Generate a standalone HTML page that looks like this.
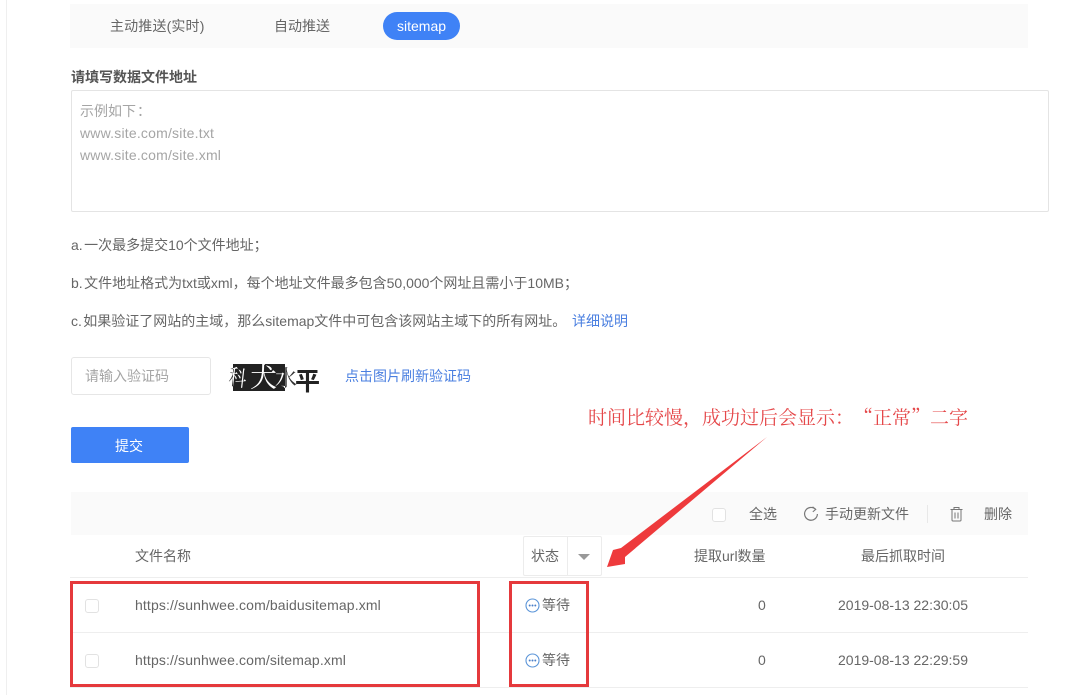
<!DOCTYPE html>
<html lang="zh-CN">
<head>
<meta charset="utf-8">
<style>
html,body{margin:0;padding:0;background:#fff;}
body{width:1084px;height:695px;position:relative;overflow:hidden;font-family:"Liberation Sans","Noto Sans CJK SC",sans-serif;font-size:14px;color:#666;}
.t{position:absolute;white-space:nowrap;line-height:20px;}
.l{letter-spacing:.13px;}
.w{letter-spacing:.2px;}
.s{word-spacing:-2.5px;}
.b{position:absolute;box-sizing:border-box;}
.cb{position:absolute;box-sizing:border-box;width:14px;height:14px;border:1px solid #e2e2e2;border-radius:3px;background:#fff;}
.line{position:absolute;height:1px;background:#eeeeee;left:70px;width:958px;}
.red{position:absolute;box-sizing:border-box;border:3px solid #e5393c;}
.cap{font-family:"Noto Serif CJK SC",serif;}
.note{position:absolute;white-space:nowrap;top:405px;font-size:19px;line-height:24px;font-family:"Noto Serif CJK SC",serif;color:#e5484a;}
</style>
</head>
<body>
<div class="b" style="left:6px;top:0;width:1px;height:695px;background:#efefef"></div>

<div class="b" style="left:70px;top:4px;width:958px;height:44px;background:#fafafa"></div>
<div class="t" style="left:110px;top:16px;letter-spacing:.15px">主动推送(实时)</div>
<div class="t" style="left:274px;top:16px">自动推送</div>
<div class="b" style="left:383px;top:12px;width:77px;height:28px;border-radius:14px;background:#3f82f6"></div>
<div class="t" style="left:397px;top:16px;color:#fff">sitemap</div>

<div class="t" style="left:71px;top:67px;font-weight:bold;color:#555">请填写数据文件地址</div>
<div class="b" style="left:71px;top:90px;width:978px;height:122px;border:1px solid #e4e4e4;border-radius:2px"></div>
<div class="t" style="left:80px;top:101px;color:#a5a5a5">示例如下<span style="margin-left:1px">&#xFF1A;</span></div>
<div class="t w" style="left:80px;top:123px;color:#a5a5a5">www.site.com/site.txt</div>
<div class="t w" style="left:80px;top:145px;color:#a5a5a5">www.site.com/site.xml</div>

<div class="t s" style="left:71px;top:235px">a. 一次最多提交10个文件地址&#xFF1B;</div>
<div class="t s" style="left:71px;top:273px">b. 文件地址格式为txt或xml&#xFF0C;每个地址文件最多包含50,000个网址且需小于10MB&#xFF1B;</div>
<div class="t s" style="left:71px;top:311px">c. 如果验证了网站的主域&#xFF0C;那么sitemap文件中可包含该网站主域下的所有网址&#x3002;</div>
<div class="t" style="left:572px;top:311px;color:#4a7fe0">详细说明</div>

<div class="b" style="left:71px;top:357px;width:140px;height:38px;border:1px solid #e6e6e6;border-radius:3px"></div>
<div class="t" style="left:85px;top:366px;color:#a5a5a5">请输入验证码</div>

<div class="t cap" style="left:229px;top:361px;font-size:22px;line-height:30px;color:#333;transform:scaleX(.8) rotate(8deg);transform-origin:left center">科</div>
<div class="b" style="left:233px;top:364px;width:52px;height:27px;background:#222;overflow:hidden">
  <div class="t cap" style="left:-4px;top:-3px;font-size:22px;line-height:30px;color:#fff;transform:scaleX(.8) rotate(8deg);transform-origin:left center">科</div>
  <div class="t cap" style="left:17px;top:-3px;font-size:27px;line-height:30px;color:#fff">犬</div>
  <div class="t cap" style="left:42px;top:-1px;font-size:22px;line-height:30px;color:#fff">水</div>
</div>
<div class="b" style="left:285px;top:362px;width:12px;height:32px;overflow:hidden">
  <div class="t cap" style="left:-10px;top:1px;font-size:22px;line-height:30px;color:#333">水</div>
</div>
<div class="t" style="left:295px;top:367px;font-size:25px;line-height:30px;font-weight:bold;color:#222">平</div>

<div class="t" style="left:345px;top:366px;color:#4a7fe0">点击图片刷新验证码</div>

<div class="b" style="left:71px;top:427px;width:118px;height:36px;border-radius:2px;background:#3f82f6"></div>
<div class="t" style="left:115px;top:436px;color:#fff">提交</div>

<div class="note" style="left:588px">时间比较慢&#xFF0C;成功过后会显示&#xFF1A;</div>
<div class="note" style="left:854px">&#x201C;正常&#x201D;</div>
<div class="note" style="left:930px">二字</div>

<div class="b" style="left:71px;top:492px;width:957px;height:43px;background:#fafafa"></div>
<div class="cb" style="left:712px;top:508px"></div>
<div class="t" style="left:749px;top:504px">全选</div>
<svg class="b" style="left:802px;top:505px" width="18" height="18" viewBox="0 0 18 18" fill="none" stroke="#777" stroke-width="1.2"><path d="M13.5 4.3A6.4 6.4 0 1 0 15.4 9"/><path d="M10.6 1.8l3.2 2.6-3 2.4" stroke-width="1"/></svg>
<div class="t" style="left:825px;top:504px">手动更新文件</div>
<div class="b" style="left:927px;top:505px;width:1px;height:18px;background:#e8e8e8"></div>
<svg class="b" style="left:949px;top:505px" width="15" height="18" viewBox="0 0 15 18" fill="none" stroke="#777" stroke-width="1"><path d="M1.5 4.5h12M3 4.5v10.5a1 1 0 0 0 1 1h7a1 1 0 0 0 1-1V4.5M5 4.5V2.5h5v2M6 7.5v6M9 7.5v6"/></svg>
<div class="t" style="left:984px;top:504px">删除</div>

<div class="t" style="left:135px;top:546px">文件名称</div>
<div class="b" style="left:523px;top:536px;width:79px;height:40px;border:1px solid #ececec;border-radius:2px"></div>
<div class="b" style="left:567px;top:536px;width:1px;height:40px;background:#ececec"></div>
<div class="t" style="left:531px;top:546px">状态</div>
<div class="b" style="left:578px;top:554px;width:0;height:0;border-left:6px solid transparent;border-right:6px solid transparent;border-top:6px solid #999"></div>
<div class="t" style="left:694px;top:546px">提取url数量</div>
<div class="t" style="left:861px;top:546px">最后抓取时间</div>
<div class="line" style="top:577px"></div>

<div class="cb" style="left:85px;top:599px"></div>
<div class="t l" style="left:135px;top:595px">https://sunhwee.com/baidusitemap.xml</div>
<svg class="b" style="left:525px;top:598px" width="15" height="15" viewBox="0 0 15 15"><circle cx="7.5" cy="7.5" r="6.5" fill="none" stroke="#5a94d8" stroke-width="1.1"/><circle cx="4.7" cy="7.5" r="1" fill="#4a7fc8"/><circle cx="7.5" cy="7.5" r="1" fill="#4a7fc8"/><circle cx="10.3" cy="7.5" r="1" fill="#4a7fc8"/></svg>
<div class="t" style="left:542px;top:595px">等待</div>
<div class="t" style="left:758px;top:595px">0</div>
<div class="t" style="left:838px;top:595px">2019-08-13 22:30:05</div>
<div class="line" style="top:632px"></div>

<div class="cb" style="left:85px;top:654px"></div>
<div class="t l" style="left:135px;top:650px">https://sunhwee.com/sitemap.xml</div>
<svg class="b" style="left:525px;top:653px" width="15" height="15" viewBox="0 0 15 15"><circle cx="7.5" cy="7.5" r="6.5" fill="none" stroke="#5a94d8" stroke-width="1.1"/><circle cx="4.7" cy="7.5" r="1" fill="#4a7fc8"/><circle cx="7.5" cy="7.5" r="1" fill="#4a7fc8"/><circle cx="10.3" cy="7.5" r="1" fill="#4a7fc8"/></svg>
<div class="t" style="left:542px;top:650px">等待</div>
<div class="t" style="left:758px;top:650px">0</div>
<div class="t" style="left:838px;top:650px">2019-08-13 22:29:59</div>
<div class="line" style="top:687px"></div>

<div class="red" style="left:70px;top:581px;width:410px;height:106px"></div>
<div class="red" style="left:509px;top:581px;width:80px;height:106px"></div>

<svg class="b" style="left:600px;top:430px" width="175" height="145" viewBox="0 0 175 145"><path d="M167 7 L21 118 L13 120 L7 137 L25 134 L25 127 Z" fill="#ee3a3c"/></svg>
</body>
</html>
